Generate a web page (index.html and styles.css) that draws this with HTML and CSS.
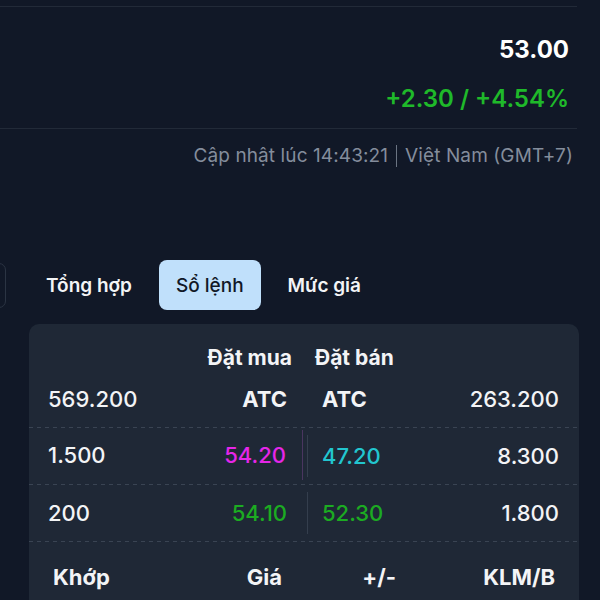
FILE: index.html
```html
<!DOCTYPE html>
<html lang="vi">
<head>
<meta charset="utf-8">
<title>Sổ lệnh</title>
<link rel="stylesheet" href="styles.css">
</head>
<body>
<div class="page">
  <section class="quote">
    <div class="price">53.00</div>
    <div class="change">+2.30 / +4.54%</div>
  </section>
  <div class="updated">Cập nhật lúc 14:43:21<span class="sep"></span>Việt Nam (GMT+7)</div>

  <div class="tabs-row">
    <div class="stub"></div>
    <nav class="tabs">
      <button class="tab">Tổng hợp</button>
      <button class="tab active">Sổ lệnh</button>
      <button class="tab">Mức giá</button>
    </nav>
  </div>

  <div class="card">
    <div class="row head">
      <div class="buy">Đặt mua</div>
      <div class="sell">Đặt bán</div>
    </div>
    <div class="row dashed">
      <div class="buy"><span>569.200</span><b>ATC</b></div>
      <div class="sell"><b>ATC</b><span>263.200</span></div>
    </div>
    <div class="row dashed split">
      <div class="buy depth"><span>1.500</span><span class="pink">54.20</span></div>
      <div class="sell"><span class="cyan">47.20</span><span>8.300</span></div>
    </div>
    <div class="row dashed split">
      <div class="buy"><span>200</span><span class="green">54.10</span></div>
      <div class="sell"><span class="green">52.30</span><span>1.800</span></div>
    </div>
    <div class="match-head">
      <div>Khớp</div>
      <div class="r">Giá</div>
      <div class="r">+/-</div>
      <div class="r">KLM/B</div>
    </div>
  </div>
</div>
</body>
</html>
```

FILE: styles.css
```css
* { box-sizing: border-box; }

html, body {
  margin: 0;
  padding: 0;
  background: #111827;
  font-family: Inter, "Noto Sans", sans-serif;
  color: #f3f4f6;
  overflow: hidden;
}

.page {
  width: 577px;
  padding-top: 6px;
}

.quote {
  border-top: 1px solid #222a38;
  border-bottom: 1px solid #222a38;
  padding: 28px 8px 14px 0;
  text-align: right;
}

.price {
  font-size: 24px;
  line-height: 30px;
  font-weight: 700;
  color: #ffffff;
}

.change {
  margin-top: 19px;
  font-size: 24px;
  line-height: 30px;
  font-weight: 600;
  color: #1fb92a;
}

.updated {
  margin-top: 14px;
  padding-right: 4px;
  text-align: right;
  font-size: 19px;
  letter-spacing: 0.1px;
  line-height: 26px;
  color: #848d9c;
}

.sep {
  display: inline-block;
  width: 1px;
  height: 22px;
  margin: 0 8px;
  background: #6b7482;
  vertical-align: -5px;
}

.tabs-row {
  margin-top: 91px;
  display: flex;
  align-items: center;
}

.stub {
  width: 40px;
  height: 45px;
  margin-left: -34px;
  border: 1px solid #2b3443;
  border-radius: 7px;
}

.tabs {
  margin-left: 23px;
  display: flex;
  gap: 10px;
}

.tab {
  height: 50px;
  padding: 0 17px;
  border: 0;
  border-radius: 8px;
  background: transparent;
  font-family: inherit;
  font-size: 19px;
  font-weight: 600;
  color: #f3f4f6;
}

.tab.active {
  background: #c0e0fb;
  color: #111827;
  font-weight: 500;
}

.card {
  margin: 14px 0 0 29px;
  width: 550px;
  height: 320px;
  background: #1f2836;
  border-radius: 10px;
  padding-top: 19px;
}

.row {
  display: flex;
  height: 56px;
  font-size: 22px;
  font-weight: 500;
}

.row.dashed {
  height: 57px;
  padding-bottom: 1px;
  background: repeating-linear-gradient(to right, #3a4453 0 4px, transparent 4px 8px) left bottom / 100% 1px no-repeat;
}

.row .buy {
  width: 274px;
  padding: 0 16px 0 19px;
  display: flex;
  align-items: center;
  justify-content: space-between;
}

.row .sell {
  flex: 1;
  margin-left: 4px;
  padding: 0 20px 0 14px;
  display: flex;
  align-items: center;
  justify-content: space-between;
  border-left: 1px solid transparent;
}

.row b { font-weight: 700; }

.row.head {
  height: 28px;
  font-size: 21px;
  font-weight: 700;
}

.row.head .buy { justify-content: flex-end; padding-right: 11px; }
.row.head .sell { padding-left: 7px; }

.row.split .sell {
  border-left-color: #343e4d;
  margin-top: 7px;
  margin-bottom: 7px;
}

.row .buy.depth {
  border-right: 1px solid #4a3660;
  margin-top: 2px;
  margin-bottom: 4px;
}

.pink { color: #e526e8; }
.cyan { color: #22c6cf; }
.green { color: #1cab22; }

.match-head {
  display: grid;
  grid-template-columns: 120px 109px 114px 159px;
  align-items: center;
  height: 70px;
  padding: 0 24px;
  font-size: 22px;
  font-weight: 700;
}

.match-head .r { text-align: right; }
```
